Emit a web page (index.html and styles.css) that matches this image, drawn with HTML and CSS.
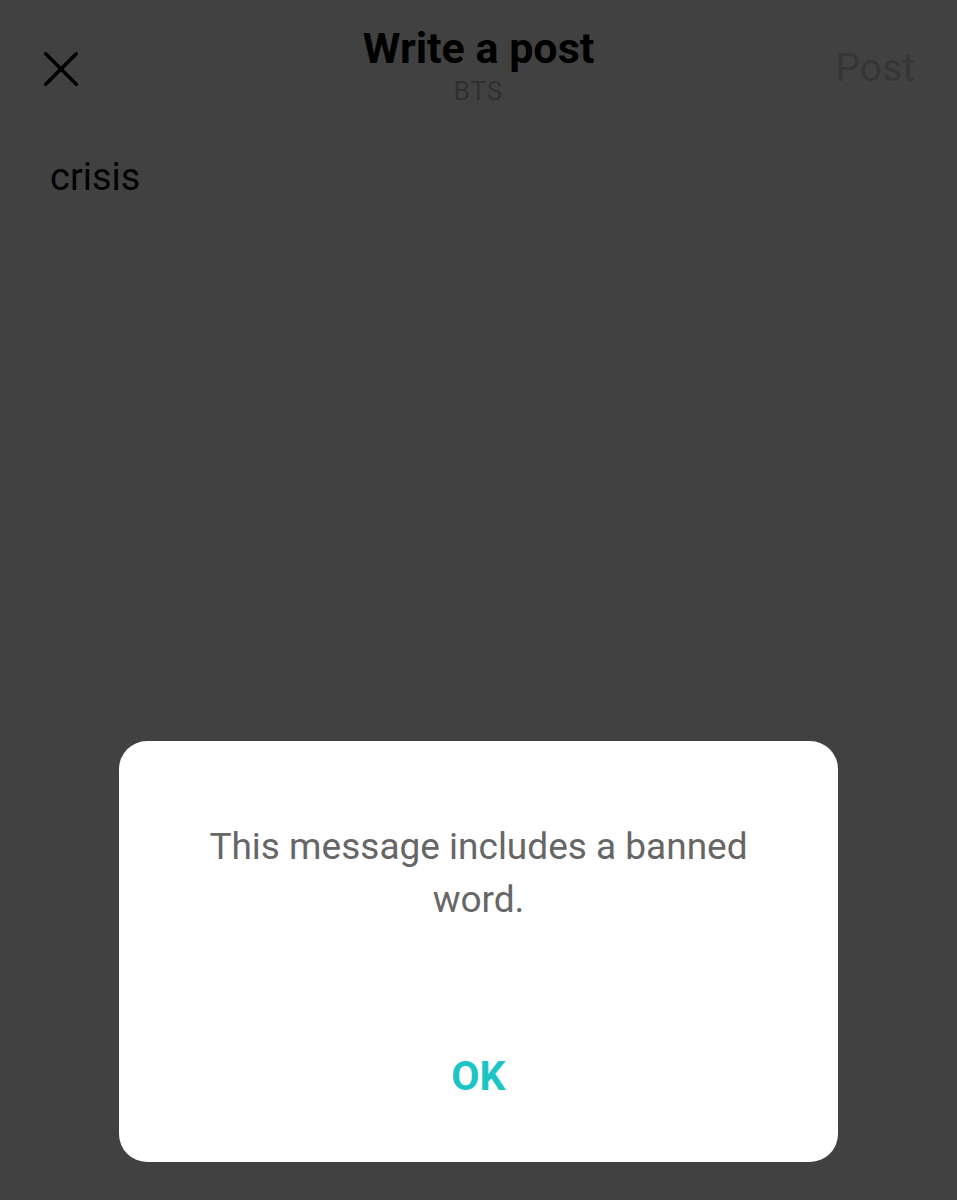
FILE: index.html
```html
<!DOCTYPE html>
<html lang="en">
<head>
<meta charset="utf-8">
<title>Write a post</title>
<link rel="stylesheet" href="styles.css">
</head>
<body>
<div class="screen">
  <header class="topbar">
    <button class="close" aria-label="Close">
      <svg viewBox="0 0 40 40" width="40" height="40"><path d="M3 3 L37 37 M37 3 L3 37" stroke="#000" stroke-width="4" stroke-linecap="round" fill="none"/></svg>
    </button>
    <div class="titles">
      <div class="title">Write a post</div>
      <div class="subtitle">BTS</div>
    </div>
    <button class="post">Post</button>
  </header>
  <div class="editor">crisis</div>
</div>
<div class="overlay">
  <div class="dialog">
    <p class="message">This message includes a banned word.</p>
    <button class="ok">OK</button>
  </div>
</div>
</body>
</html>
```
FILE: styles.css
```css
* { box-sizing: border-box; }
html, body { margin: 0; padding: 0; }
body {
  width: 957px;
  height: 1200px;
  background: #fff;
  font-family: Roboto, "Liberation Sans", sans-serif;
  overflow: hidden;
}
.screen { height: 1200px; }
.topbar {
  display: grid;
  grid-template-columns: 1fr auto 1fr;
  align-items: start;
  padding: 0 42px 0 42px;
  height: 140px;
}
button {
  background: none;
  border: 0;
  padding: 0;
  font-family: inherit;
  cursor: pointer;
}
.close {
  width: 40px;
  height: 40px;
  margin-top: 49px;
  display: block;
  justify-self: start;
}
.close svg { display: block; width: 38px; height: 36px; }
.titles {
  display: flex;
  flex-direction: column;
  align-items: center;
  padding-top: 24px;
}
.title {
  font-size: 43px;
  font-weight: 700;
  color: #000;
  line-height: 48px;
  letter-spacing: 0;
}
.subtitle {
  font-size: 26px;
  color: #b9b9b9;
  line-height: 30px;
  letter-spacing: 1px;
  margin-top: 4px;
}
.post {
  justify-self: end;
  font-size: 39px;
  color: #d2d2d2;
  margin-top: 45px;
  line-height: 46px;
}
.editor {
  padding: 155px 50px 0;
  margin-top: -140px;
  font-size: 38px;
  color: #0a0a0a;
  line-height: 44px;
}
.overlay {
  position: fixed;
  inset: 0;
  background: rgba(0, 0, 0, 0.745);
  display: flex;
  justify-content: center;
  align-items: flex-end;
  padding-bottom: 38px;
}
.dialog {
  width: 719px;
  height: 421px;
  background: #fff;
  border-radius: 28px;
  display: flex;
  flex-direction: column;
  align-items: center;
  padding: 79px 80px 64px;
}
.message {
  margin: 0;
  font-size: 37px;
  line-height: 53px;
  color: #666;
  text-align: center;
  flex: 1;
}
.ok {
  font-size: 41px;
  font-weight: 700;
  color: #1bc5c6;
  line-height: 44px;
}
```
